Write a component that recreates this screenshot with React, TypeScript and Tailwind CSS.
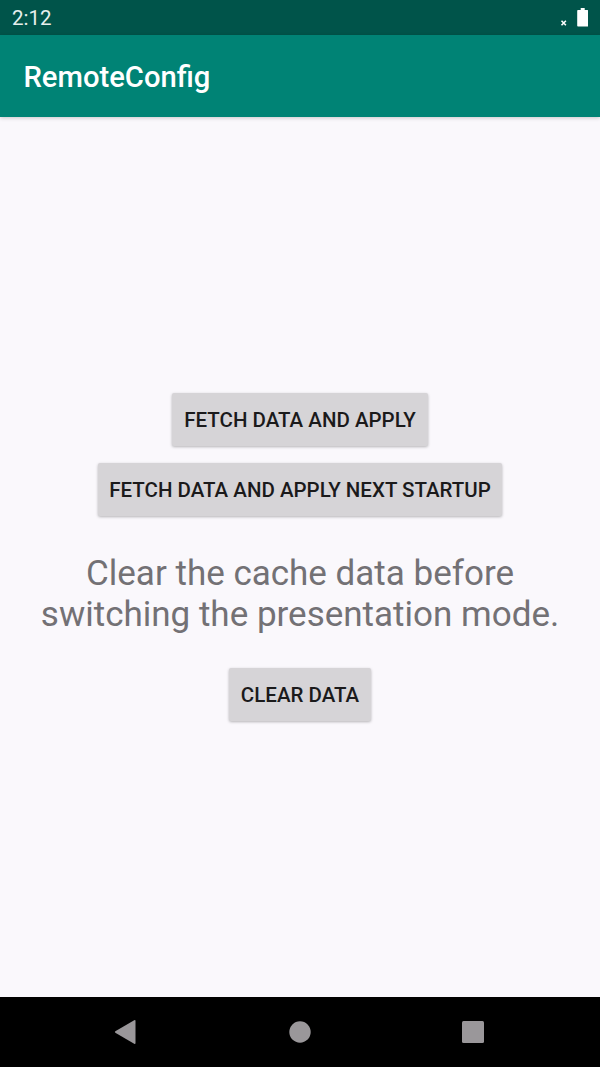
function Btn({ children, className }: { children: string; className: string }) {
  return (
    <button className={`h-[53px] rounded-[2px] bg-[#d6d4d7] text-[20.5px] font-medium leading-[24px] text-[#1b1a1b] shadow-[0_1px_3px_rgba(0,0,0,0.28)] whitespace-nowrap ${className}`}>
      {children}
    </button>
  );
}

export default function App() {
  return (
    <div className="flex h-[1067px] w-[600px] flex-col overflow-hidden bg-[#faf8fc] font-['Roboto',sans-serif]">
      <div className="flex h-[35px] items-center justify-between bg-[#00544a] px-3 text-white">
        <span className="pt-[2px] text-[20.5px] leading-[33px] text-[#e6efed]">2:12</span>
        <svg width="28" height="35" viewBox="560 0 28 35">
          <path d="M561.500 20.800l4.400 4.400m0-4.400l-4.400 4.400" stroke="#fff" strokeWidth="1.6" />
          <path d="M578 10h2.700v-2h4v2h2.700q.8 0 .8.800v15q0 .8-.8.800h-9.400q-.8 0-.8-.8v-15q0-.8.8-.8z" fill="#fff" />
        </svg>
      </div>
      <div className="z-10 flex h-[82px] items-center bg-[#008375] pl-[23.500px] pt-[2px] shadow-[0_1px_4px_rgba(0,0,0,0.2)]">
        <h1 className="text-[29.200px] font-medium leading-[34px] text-white">RemoteConfig</h1>
      </div>
      <main className="flex flex-1 flex-col items-center pt-[276px]">
        <Btn className="w-[256px]">FETCH DATA AND APPLY</Btn>
        <Btn className="mt-[17px] w-[404px]">FETCH DATA AND APPLY NEXT STARTUP</Btn>
        <p className="mt-[37px] text-center text-[35px] leading-[41px] text-[#737175]">
          Clear the cache data before
          <br />
          switching the presentation mode.
        </p>
        <Btn className="mt-[33px] w-[142px]">CLEAR DATA</Btn>
      </main>
      <nav className="h-[70px] bg-black">
        <svg width="600" height="70" viewBox="0 997 600 70" fill="#9a979a">
          <path d="M115.300 1031.300L134.200 1020.300Q135.500 1019.700 135.500 1021V1043Q135.500 1044.300 134.200 1043.700L115.300 1032.700Q114.400 1032 115.300 1031.300Z" />
          <circle cx="300" cy="1032" r="10.700" />
          <rect x="462" y="1021" width="22" height="22" rx="1.500" />
        </svg>
      </nav>
    </div>
  );
}
